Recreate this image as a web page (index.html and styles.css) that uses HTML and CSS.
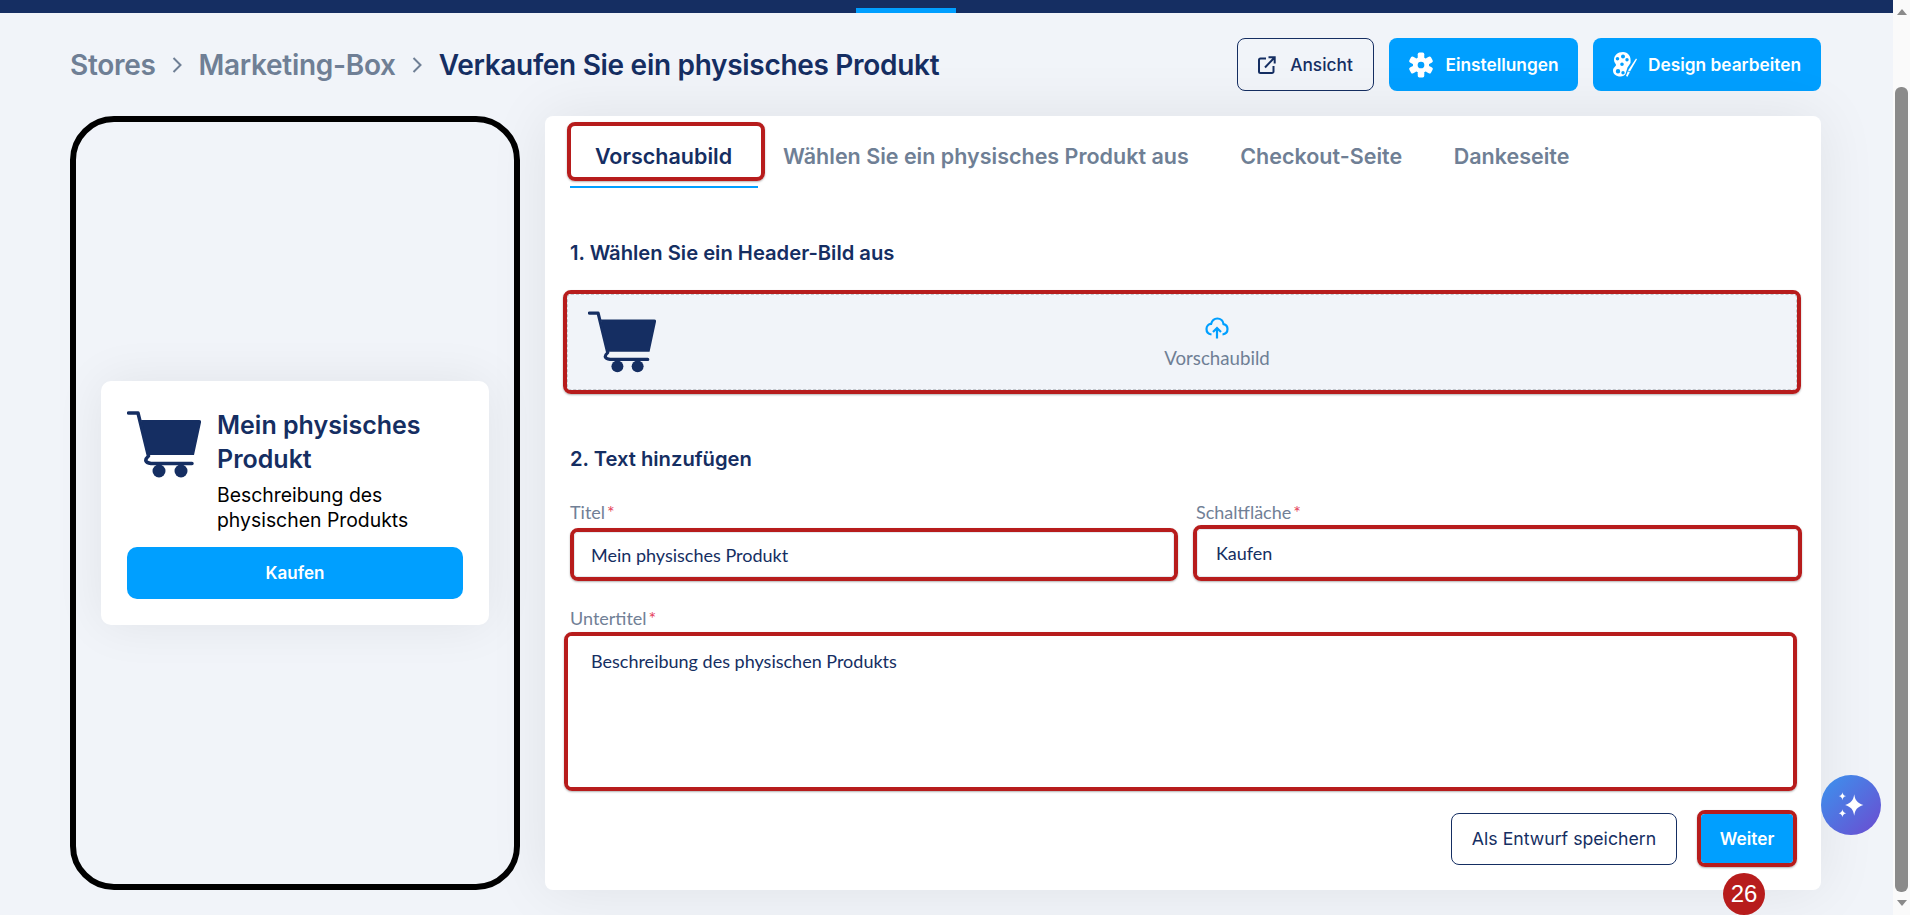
FILE: index.html
```html
<!DOCTYPE html>
<html lang="de">
<head>
    <meta charset="UTF-8">
    <title>Verkaufen Sie ein physisches Produkt</title>
    <link rel="stylesheet" href="styles.css">
</head>
<body>
    <svg class="defs" width="0" height="0">
        <symbol id="cart" viewBox="0 0 74 67">
            <path d="M14 9H72a2 2 0 0 1 2 2.4L67 44H21Z" fill="#152e62"/>
            <path d="M1.500 2H11L21.500 45Q15 51 24 52.500H65" fill="none" stroke="#152e62" stroke-width="3.500" stroke-linecap="round" stroke-linejoin="round"/>
            <circle cx="32" cy="60" r="6.500" fill="#152e62"/>
            <circle cx="54" cy="60" r="6.500" fill="#152e62"/>
        </symbol>
    </svg>

    <div class="app">
        <div class="page">
            <div class="topbar"><span class="topbar-active"></span></div>
            <div class="content">
                <header class="page-head">
                    <nav class="crumbs">
                        <span>Stores</span>
                        <svg class="crumb-sep" viewBox="0 0 10 18"><path d="M1.500 2l7 7-7 7"/></svg>
                        <span>Marketing-Box</span>
                        <svg class="crumb-sep" viewBox="0 0 10 18"><path d="M1.500 2l7 7-7 7"/></svg>
                        <span class="crumb-current">Verkaufen Sie ein physisches Produkt</span>
                    </nav>
                    <div class="head-actions">
                        <button class="btn btn-outline btn-view">
                            <svg class="icon-view" viewBox="0 0 18 18"><path d="M8 2.500H2.500a1.500 1.500 0 0 0-1.500 1.500V15.500a1.500 1.500 0 0 0 1.500 1.500H14a1.500 1.500 0 0 0 1.500-1.500V10M7 11.500L16.500 1.500M10.500 1.300H16.700V7.500"/></svg>
                            Ansicht
                        </button>
                        <button class="btn btn-blue btn-settings">
                            <svg class="icon-gear" viewBox="0 0 24 24">
                                <path fill-rule="evenodd" d="M12 4.500a7.500 7.500 0 1 0 0 15 7.500 7.500 0 0 0 0-15ZM12 8.900a3.100 3.100 0 1 1 0 6.200 3.100 3.100 0 0 1 0-6.200Z"/>
                                <rect x="9" y="0.500" width="6" height="5.500" rx="1.500"/>
                                <rect x="9" y="18" width="6" height="5.500" rx="1.500"/>
                                <rect x="9" y="0.500" width="6" height="5.500" rx="1.500" transform="rotate(60 12 12)"/>
                                <rect x="9" y="0.500" width="6" height="5.500" rx="1.500" transform="rotate(120 12 12)"/>
                                <rect x="9" y="0.500" width="6" height="5.500" rx="1.500" transform="rotate(240 12 12)"/>
                                <rect x="9" y="0.500" width="6" height="5.500" rx="1.500" transform="rotate(300 12 12)"/>
                            </svg>
                            Einstellungen
                        </button>
                        <button class="btn btn-blue btn-design">
                            <svg class="icon-palette" viewBox="0 0 24 25">
                                <path fill-rule="evenodd" d="M10 0C4.500 0 1 3.500 1 8c0 2.500 2 3.500 2 5 0 1.500-3 2.500-3 5.500C0 22 3 24.500 7.500 24.500c2.500 0 4-1 5-2.500l2-6.500 3-4.500C18.500 4 15 0 10 0ZM10 2.500a2 2 0 1 1 0 4 2 2 0 0 1 0-4ZM4.500 5a1.800 1.800 0 1 1 0 3.600 1.800 1.800 0 0 1 0-3.600ZM14 6a1.700 1.700 0 1 1 0 3.400 1.700 1.700 0 0 1 0-3.400ZM9 10.500a1.800 1.800 0 1 1 0 3.600 1.800 1.800 0 0 1 0-3.600ZM5 17a2.200 2.200 0 1 1 0 4.400 2.200 2.200 0 0 1 0-4.400ZM10 19a1.700 1.700 0 1 1 0 3.400 1.700 1.700 0 0 1 0-3.400Z"/>
                                <path d="M23 6.500L24 7.200 17 19.500 15 18.500Z"/>
                                <path d="M14.800 19.300L16.800 20.300 14.500 24.800 13 24Z"/>
                            </svg>
                            Design bearbeiten
                        </button>
                    </div>
                </header>

                <div class="columns">
                    <aside class="phone">
                        <div class="preview-card">
                            <div class="preview-top">
                                <svg class="cart-preview"><use href="#cart"/></svg>
                                <div>
                                    <div class="preview-title">Mein physisches Produkt</div>
                                    <div class="preview-desc">Beschreibung des physischen Produkts</div>
                                </div>
                            </div>
                            <button class="preview-buy">Kaufen</button>
                        </div>
                    </aside>

                    <main class="panel">
                        <div class="tabs">
                            <div class="tab tab-active"><span class="mark tab-mark">Vorschaubild</span></div>
                            <div class="tab">Wählen Sie ein physisches Produkt aus</div>
                            <div class="tab">Checkout-Seite</div>
                            <div class="tab">Dankeseite</div>
                        </div>

                        <h2 class="step step-first">1. Wählen Sie ein Header-Bild aus</h2>
                        <div class="mark drop-mark">
                            <div class="dropzone">
                                <svg class="cart-drop"><use href="#cart"/></svg>
                                <div class="drop-label">
                                    <svg class="icon-upload" viewBox="0 0 24 24"><path d="M6.500 18.500C3.500 18 1.500 15.800 1.500 13c0-2.700 2-4.900 4.600-5.100C7 4.800 9.300 2.500 12.300 2.500c3.400 0 5.800 2.500 6.200 5.600 2.300.4 4 2.500 4 5 0 2.700-2 5-5 5.400"/><path d="M12 22.500V12M8 16l4-4 4 4"/></svg>
                                    <span>Vorschaubild</span>
                                </div>
                            </div>
                        </div>

                        <h2 class="step step-second">2. Text hinzufügen</h2>
                        <div class="fields">
                            <div class="field">
                                <label class="field-label">Titel<em>*</em></label>
                                <div class="mark input-mark"><input class="input" value="Mein physisches Produkt"></div>
                            </div>
                            <div class="field">
                                <label class="field-label field-label-right">Schaltfläche<em>*</em></label>
                                <div class="mark input-mark input-mark-tall"><input class="input input-right" value="Kaufen"></div>
                            </div>
                        </div>
                        <label class="field-label field-label-sub">Untertitel<em>*</em></label>
                        <div class="mark area-mark"><textarea class="area">Beschreibung des physischen Produkts</textarea></div>

                        <div class="form-actions">
                            <button class="btn btn-outline btn-draft">Als Entwurf speichern</button>
                            <div class="mark next-mark"><button class="btn btn-blue btn-next">Weiter</button></div>
                        </div>
                    </main>
                </div>
            </div>

            <div class="step-badge">26</div>
            <div class="fab">
                <svg class="icon-spark" viewBox="0 0 28 28">
                    <path d="M17 4c.8 5.500 2.800 8.200 8.500 10-5.700 1.800-7.700 4.500-8.500 10-.8-5.500-2.800-8.200-8.500-10 5.700-1.800 7.700-4.500 8.500-10Z"/>
                    <path d="M6 2c.3 2 1.200 3.200 3.500 3.700C7.200 6.300 6.300 7.500 6 9.500 5.700 7.500 4.800 6.300 2.500 5.700 4.800 5.200 5.700 4 6 2Z"/>
                    <path d="M6 18c.3 2 1.200 3.200 3.500 3.700C7.200 22.300 6.300 23.500 6 25.500 5.700 23.500 4.800 22.300 2.500 21.700 4.800 21.200 5.700 20 6 18Z"/>
                </svg>
            </div>
        </div>

        <div class="scrollbar">
            <span class="arrow-up"></span>
            <span class="thumb"></span>
            <span class="arrow-down"></span>
        </div>
    </div>
</body>
</html>
```

FILE: styles.css
```css
* {
    box-sizing: border-box;
}
html, body {
    height: 100%;
}
body {
    margin: 0;
    overflow: hidden;
    background-color: #f1f4f9;
    color: #152e62;
    font-family: Inter, "Liberation Sans", sans-serif;
}
.defs {
    position: absolute;
}
.app {
    display: flex;
    height: 915px;
}
.page {
    flex: 1;
    position: relative;
    min-width: 0;
}

/* top bar */
.topbar {
    height: 13px;
    padding-left: 856px;
    background-color: #152e62;
}
.topbar-active {
    display: block;
    width: 100px;
    height: 5px;
    position: relative;
    top: 8px;
    background-color: #009fff;
}

.content {
    padding: 25px 72px 0 70px;
}

/* header */
.page-head {
    display: flex;
    justify-content: space-between;
    align-items: center;
    height: 53px;
}
.crumbs {
    display: flex;
    align-items: center;
    font-size: 28px;
    font-weight: 600;
    color: #6f7f95;
    letter-spacing: -0.3px;
}
.crumb-sep {
    width: 12px;
    height: 18px;
    margin: 0 16px 0 15px;
    fill: none;
    stroke: #6f7f95;
    stroke-width: 2;
}
.crumb-current {
    color: #152e62;
}
.head-actions {
    display: flex;
    gap: 15px;
}
.btn {
    display: flex;
    align-items: center;
    justify-content: center;
    height: 53px;
    border-radius: 8px;
    font-family: Inter, "Liberation Sans", sans-serif;
    font-size: 17.3px;
    font-weight: 500;
    cursor: pointer;
}
.btn-outline {
    border: 1px solid #152e62;
    background: transparent;
    color: #152e62;
}
.btn-blue {
    border: none;
    background-color: #009fff;
    color: #fff;
    font-weight: 600;
}
.btn-view {
    width: 137px;
    gap: 14px;
}
.icon-view {
    width: 18px;
    height: 18px;
    fill: none;
    stroke: #152e62;
    stroke-width: 2;
}
.btn-settings {
    width: 189px;
    gap: 11px;
}
.icon-gear {
    width: 26px;
    height: 26px;
    fill: #fff;
}
.btn-design {
    width: 228px;
    gap: 11px;
}
.icon-palette {
    width: 24px;
    height: 25px;
    fill: #fff;
}

/* columns */
.columns {
    display: flex;
    gap: 25px;
    margin-top: 25px;
    height: 774px;
}
.phone {
    flex: 0 0 450px;
    display: flex;
    align-items: center;
    justify-content: center;
    border: 6px solid #000;
    border-radius: 44px;
}
.preview-card {
    width: 388px;
    height: 244px;
    padding: 30px 26px 26px;
    background-color: #fff;
    border-radius: 10px;
    box-shadow: 0 0 50px rgba(0, 0, 0, 0.07);
}
.preview-top {
    display: flex;
    gap: 16px;
    height: 136px;
}
.cart-preview {
    flex: none;
    width: 74px;
    height: 67px;
}
.preview-title {
    font-size: 25px;
    font-weight: 600;
    line-height: 34px;
    margin-top: -3px;
}
.preview-desc {
    margin-top: 7px;
    width: 215px;
    font-size: 19.4px;
    line-height: 25px;
    color: #000;
}
.preview-buy {
    display: block;
    width: 336px;
    height: 52px;
    border: none;
    border-radius: 10px;
    background-color: #009fff;
    color: #fff;
    font-family: Inter, "Liberation Sans", sans-serif;
    font-size: 17px;
    font-weight: 600;
}

/* form panel */
.panel {
    flex: 1;
    min-width: 0;
    padding: 6px 25px 0;
    background-color: #fff;
    border-radius: 8px;
    box-shadow: 0 0 60px rgba(0, 0, 0, 0.08);
}
.mark {
    display: block;
    border: 4px solid #b71c1c;
    border-radius: 8px;
    box-shadow: 0 1px 2px rgba(0, 0, 0, 0.3);
}
.tabs {
    display: flex;
    align-items: flex-start;
    font-size: 21.5px;
    font-weight: 600;
    color: #6f7f95;
}
.tab {
    padding: 0 26.5px 0 25px;
    line-height: 68px;
}
.tab-active {
    width: 188px;
    height: 66px;
    padding: 0;
    border-bottom: 2px solid #009fff;
    color: #152e62;
}
.tab-mark {
    width: 198px;
    height: 59px;
    margin-left: -3px;
    padding-right: 5px;
    line-height: 60px;
    text-align: center;
}
.step {
    margin: 0;
    font-size: 20.2px;
    font-weight: 600;
    line-height: 24px;
}
.step-first {
    margin-top: 51px;
}
.step-second {
    margin-top: 53px;
}
.drop-mark {
    height: 104px;
    margin: 25px -5px 0 -7px;
}
.dropzone {
    display: flex;
    align-items: center;
    height: 100%;
    padding: 0 20px;
    position: relative;
    background-color: #f1f4f9;
    border: 1px dashed #c4c8ce;
    border-radius: 4px;
}
.cart-drop {
    flex: none;
    width: 68px;
    height: 62px;
}
.drop-label {
    display: flex;
    flex-direction: column;
    align-items: center;
    gap: 7px;
    flex: 1;
    padding-left: 2px;
    font-family: Lato, sans-serif;
    font-size: 18.7px;
    color: #6f7f95;
}
.icon-upload {
    width: 24px;
    height: 24px;
    fill: none;
    stroke: #009fff;
    stroke-width: 2.2;
}
.fields {
    display: grid;
    grid-template-columns: 608fr 609fr;
    column-gap: 15px;
    margin: 31px -6px 0 0;
}
.field-label {
    display: block;
    height: 20px;
    font-family: Lato, sans-serif;
    font-size: 18px;
    line-height: 20px;
    color: #718096;
}
.field-label em {
    margin-left: 2px;
    color: #e53e5a;
    font-style: normal;
}
.field-label-right {
    margin-left: 3px;
}
.input-mark {
    height: 53px;
    margin-top: 6px;
}
.input-mark-tall {
    height: 56px;
    margin-top: 3px;
}
.input {
    display: block;
    width: 100%;
    height: 100%;
    padding: 0 16px;
    border: 1px solid #e6e9ef;
    border-radius: 4px;
    background: #fff;
    outline: none;
    font-family: Lato, sans-serif;
    font-size: 18px;
    color: #152e62;
}
.input-right {
    padding-left: 18px;
}
.field-label-sub {
    margin-top: 27px;
}
.area-mark {
    height: 159px;
    margin: 4px -1px 0 -6px;
}
.area {
    display: block;
    width: 100%;
    height: 100%;
    padding: 14px 23px;
    border: none;
    border-radius: 4px;
    resize: none;
    outline: none;
    font-family: Lato, sans-serif;
    font-size: 18px;
    line-height: 22px;
    color: #152e62;
}
.form-actions {
    display: flex;
    justify-content: flex-end;
    align-items: center;
    gap: 20px;
    margin: 19px -1px 0 0;
}
.btn-draft {
    width: 226px;
    height: 52px;
    background: #fff;
    font-size: 17.7px;
    font-weight: 400;
}
.next-mark {
    width: 100px;
    height: 57px;
}
.btn-next {
    width: 100%;
    height: 100%;
    padding-left: 6px;
    border-radius: 4px;
}

/* overlays */
.step-badge {
    position: absolute;
    left: 1723px;
    top: 873px;
    width: 42px;
    height: 42px;
    border-radius: 50%;
    background-color: #b71c1c;
    color: #fff;
    font-family: "Liberation Sans", sans-serif;
    font-size: 24px;
    line-height: 42px;
    text-align: center;
}
.fab {
    position: absolute;
    left: 1821px;
    top: 775px;
    width: 60px;
    height: 60px;
    display: flex;
    align-items: center;
    justify-content: center;
    border-radius: 50%;
    background: linear-gradient(135deg, #3b94ee, #6c4bd0);
}
.icon-spark {
    width: 30px;
    height: 30px;
    fill: #fff;
}

/* scrollbar */
.scrollbar {
    flex: 0 0 17px;
    display: flex;
    flex-direction: column;
    align-items: center;
    background-color: #fafafa;
}
.arrow-up {
    margin-top: 9px;
    border: 5px solid transparent;
    border-top: none;
    border-bottom: 6px solid #8a8a8a;
}
.thumb {
    flex: none;
    width: 13px;
    height: 805px;
    margin-top: 72px;
    border-radius: 6px;
    background-color: #8a8a8a;
}
.arrow-down {
    margin-top: 8px;
    border: 5px solid transparent;
    border-bottom: none;
    border-top: 6px solid #8a8a8a;
}
```
